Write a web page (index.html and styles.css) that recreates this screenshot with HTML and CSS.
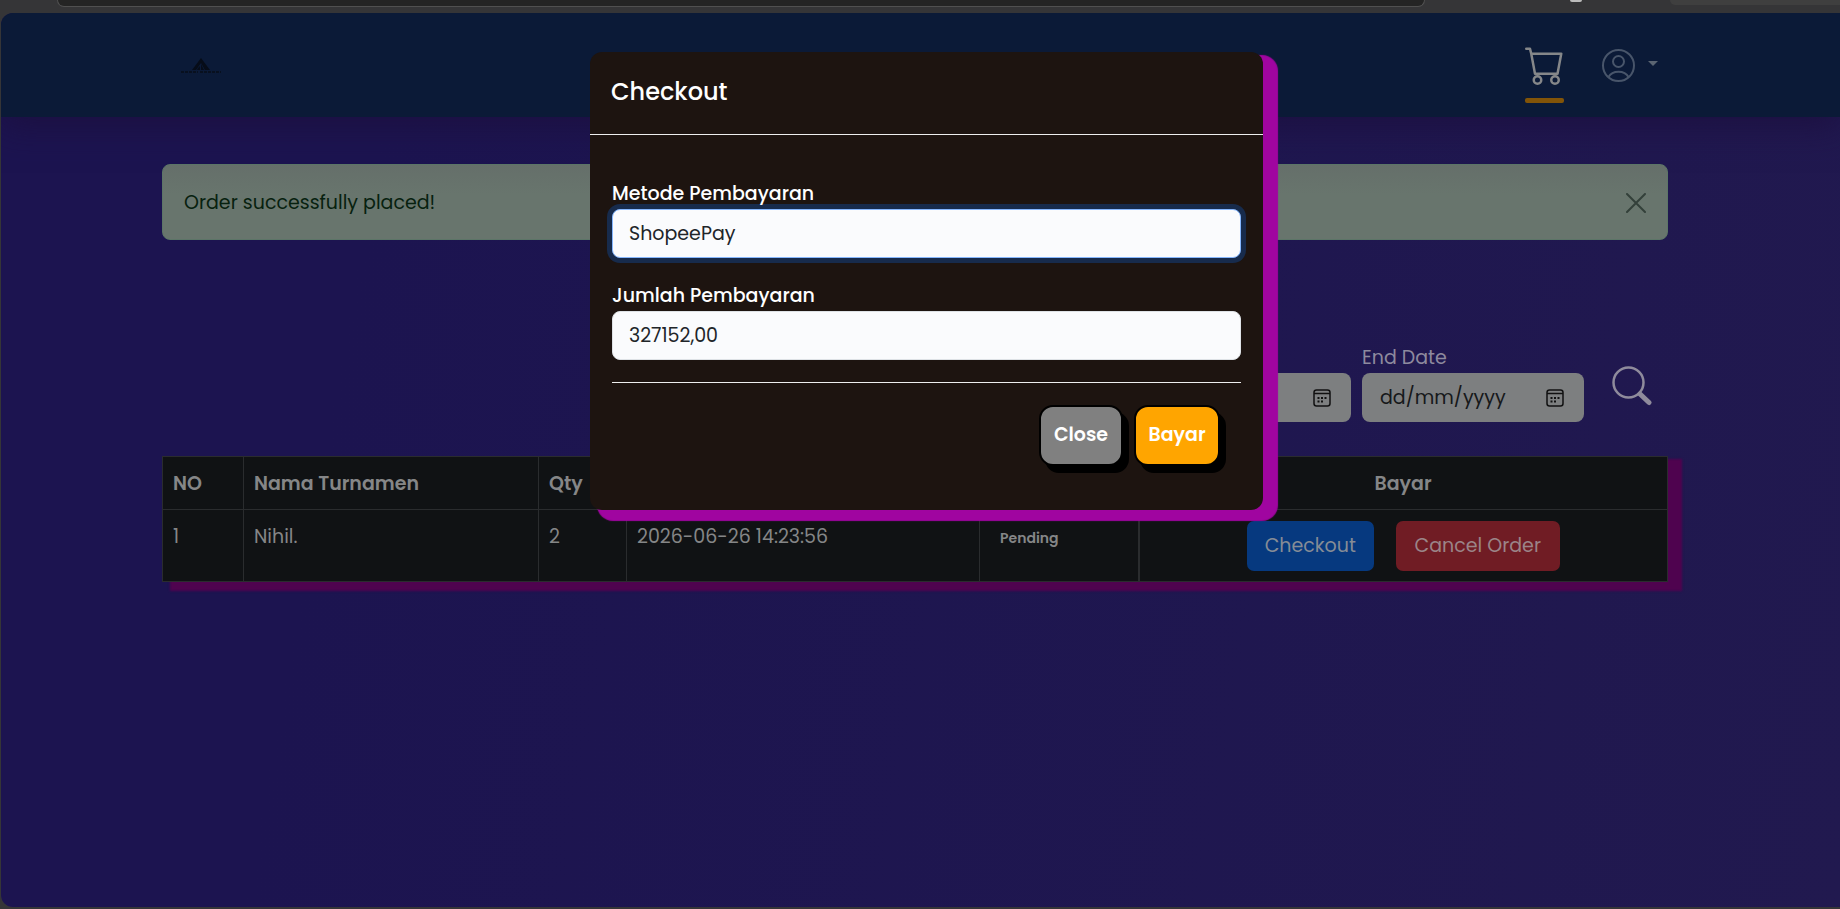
FILE: index.html
```html
<!DOCTYPE html>
<html lang="id">
<head>
<meta charset="utf-8">
<title>Checkout</title>
<link rel="stylesheet" href="styles.css">
</head>
<body>
<div class="chrome"><span class="address"></span><span class="dot"></span><span class="pill"></span></div>
<div class="page">
  <header class="navbar">
    <a class="brand" href="#" aria-label="Beranda">
      <svg width="40" height="18" viewBox="0 0 40 18"><path d="M20 0 29 12H24L20 5 15 12H11Z"/><path d="M20 6 23 12H20ZM17 10l2-2v4h-3z"/><path d="M0 14H17M19 14H40" stroke="#08101f" stroke-width="2" stroke-dasharray="3 1"/></svg>
    </a>
    <nav class="nav">
      <a class="cart" href="#" aria-label="Keranjang">
        <svg width="40" height="40" viewBox="0 0 16 16" fill="currentColor"><path d="M0 1.5A.5.5 0 0 1 .5 1H2a.5.5 0 0 1 .485.379L2.89 3H14.5a.5.5 0 0 1 .491.592l-1.5 8A.5.5 0 0 1 13 12H4a.5.5 0 0 1-.491-.408L2.01 3.607 1.61 2H.5a.5.5 0 0 1-.5-.5M3.102 4l1.313 7h8.17l1.313-7zM5 12a2 2 0 1 0 0 4 2 2 0 0 0 0-4m7 0a2 2 0 1 0 0 4 2 2 0 0 0 0-4m-7 1a1 1 0 1 1 0 2 1 1 0 0 1 0-2m7 0a1 1 0 1 1 0 2 1 1 0 0 1 0-2"/></svg>
      </a>
      <button class="user" type="button" aria-label="Akun">
        <svg width="33" height="33" viewBox="0 0 33 33" fill="none" stroke="currentColor" stroke-width="2"><circle cx="16.500" cy="16.500" r="15.500"/><circle cx="16.500" cy="12.500" r="5.500"/><path d="M6.500 28a11 9 0 0 1 20 0"/></svg>
        <span class="caret"></span>
      </button>
    </nav>
  </header>
  <main class="content">
    <div class="alert" role="alert">
      <span>Order successfully placed!</span>
      <button class="dismiss" type="button" aria-label="Tutup"><svg width="20" height="20" viewBox="0 0 20 20" stroke="currentColor" stroke-width="2" stroke-linecap="round"><path d="M1 1 19 19M19 1 1 19"/></svg></button>
    </div>
    <form class="filters">
      <div class="field">
        <div class="date"><input type="text" aria-label="Start Date" placeholder="dd/mm/yyyy"><svg class="cal" width="18" height="18" viewBox="0 0 18 18"><use href="#cal"/></svg></div>
      </div>
      <div class="field">
        <label for="end">End Date</label>
        <div class="date"><input id="end" type="text" placeholder="dd/mm/yyyy"><svg class="cal" width="18" height="18" viewBox="0 0 18 18"><g id="cal"><rect x="1" y="1" width="16" height="16" rx="2.500" fill="none" stroke="#111" stroke-width="1.500"/><path d="M1 4.500H17" stroke="#111" stroke-width="1.500"/><path d="M4.500 9h2M8 9h2M11.500 9h2M4.500 12.500h2M8 12.500h2" stroke="#111" stroke-width="2"/></g></svg></div>
      </div>
      <button class="search" type="button" aria-label="Cari"><svg width="40" height="40" viewBox="0 0 40 40" fill="none" stroke="currentColor"><circle cx="16.500" cy="16.500" r="15" stroke-width="2.500"/><path d="M28 28 37 36.500" stroke-width="5" stroke-linecap="round"/></svg></button>
    </form>
    <table class="orders">
      <colgroup><col class="c-no"><col class="c-name"><col class="c-qty"><col class="c-date"><col class="c-status"><col></colgroup>
      <thead><tr><th>NO</th><th>Nama Turnamen</th><th>Qty</th><th></th><th></th><th class="center">Bayar</th></tr></thead>
      <tbody><tr><td>1</td><td>Nihil.</td><td>2</td><td>2026-06-26 14:23:56</td><td><span class="badge">Pending</span></td>
      <td class="pay"><div class="actions"><button class="btn blue" type="button">Checkout</button><button class="btn red" type="button">Cancel Order</button></div></td></tr></tbody>
    </table>
  </main>
  <div class="overlay">
    <section class="modal" role="dialog" aria-labelledby="title">
      <h2 class="title" id="title">Checkout</h2>
      <form class="form">
        <label for="method">Metode Pembayaran</label>
        <select class="control focused" id="method"><option>ShopeePay</option></select>
        <label for="amount">Jumlah Pembayaran</label>
        <input class="control" id="amount" type="text" value="327152,00">
        <div class="footer">
          <button class="action close" type="button">Close</button>
          <button class="action submit" type="button">Bayar</button>
        </div>
      </form>
    </section>
  </div>
</div>
</body>
</html>
```
FILE: styles.css
```css
* { box-sizing: border-box; }
body {
  margin: 0;
  height: 100vh;
  display: flex;
  flex-direction: column;
  background: #353537;
  font: 19px/30px Poppins, Inter, sans-serif;
  padding: 0 0 2px 1px;
}
button, input, select { font: inherit; }
.chrome { height: 13px; display: flex; padding-left: 56px; flex: none; }
.address { flex: none; width: 1368px; height: 7px; background: #242424; border: solid #505050; border-width: 0 1px 1px; border-radius: 0 0 16px 16px; }
.dot { width: 12px; height: 2px; margin: 0 88px 0 145px; background: #bbb; border-radius: 0 0 6px 6px; flex: none; }
.pill { flex: 1; height: 5px; background: #3f3f3f; border-radius: 0 0 0 8px; }
.page {
  position: relative;
  flex: 1;
  border-radius: 12px 0 0 12px;
  overflow: hidden;
  background: linear-gradient(100deg, #1c1450 20%, #21194f);
}
.navbar {
  height: 104px;
  background: #0b1a37;
  box-shadow: 0 8px 32px #1c1040;
  padding: 0 182px 0 180px;
  display: flex;
  align-items: flex-start;
  justify-content: space-between;
}
.brand { margin-top: 45px; fill: #060c18; }
.brand svg, .cart svg, .user svg, .search svg, .dismiss svg { display: block; }
.nav { display: flex; gap: 38px; }
.cart { margin-top: 32px; width: 39px; color: #858789; }
.cart::after { content: ""; display: block; height: 5px; margin-top: 13px; border-radius: 2px; background: #825408; }
.user { margin-top: 36px; padding: 0; border: 0; background: none; color: #48556a; display: flex; align-items: flex-start; gap: 13px; }
.caret { margin-top: 12px; border: 5px solid transparent; border-top-color: #5b6572; border-bottom: 0; }
.content { padding: 47px 172px 0 161px; }
.alert {
  height: 76px;
  padding: 2px 21px 0;
  display: flex;
  align-items: center;
  justify-content: space-between;
  border-radius: 8px;
  background: linear-gradient(#656f6a, #68756d 40%);
  border: 1px solid #5c7567;
  color: #07210f;
}
.dismiss { border: 0; padding: 0; background: none; color: #33403a; }
.filters { margin-top: 102px; display: flex; justify-content: flex-end; align-items: flex-end; gap: 11px; padding-right: 16px; }
.field { flex: none; width: 222px; color: #8e8a9e; }
.field label { display: block; line-height: 31px; }
.date { height: 49px; display: flex; align-items: center; justify-content: space-between; background: #7d7f80; border-radius: 8px; padding: 0 20px 0 18px; }
.date input { width: 140px; padding: 0; border: 0; background: none; color: #16181a; outline: 0; }
.date input::placeholder { color: #16181a; opacity: 1; }
.search { margin: 0 0 16px 17px; border: 0; padding: 0; background: none; color: #8f8b9c; }
.orders {
  margin-top: 34px;
  width: 100%;
  table-layout: fixed;
  border-collapse: collapse;
  background: #101214;
  color: #858687;
  box-shadow: 11px 6px 2px 3px #4f034f;
}
.orders th, .orders td { border: 1px solid #2a2c2e; padding: 12px 10px 10px; text-align: left; vertical-align: top; }
.orders th { font-weight: 600; }
.orders .center { text-align: center; }
.orders .pay { padding: 11px 0 10px; border-left-width: 2px; }
.c-no { width: 81px; }
.c-name { width: 295px; }
.c-qty { width: 88px; }
.c-date { width: 353px; }
.c-status { width: 159px; }
.badge { padding-left: 10px; font-size: 14px; font-weight: 600; }
.actions { display: flex; justify-content: center; gap: 22px; }
.btn { height: 50px; border: 0; border-radius: 7px; padding: 0; color: #858c96; }
.blue { width: 127px; background: #06397f; }
.red { width: 164px; background: #701c24; color: #9b8488; }
.overlay { position: absolute; inset: 0; display: flex; justify-content: center; align-items: flex-start; padding: 39px 0 0 12px; }
.modal { width: 673px; background: #1d1410; border-radius: 12px; color: #fff; box-shadow: 11px 7px 1px 4px #a005a0; }
.title { margin: 0; padding: 22px 21px 24px; font-size: 24px; line-height: 36px; font-weight: 500; border-bottom: 1px solid #eee; }
.form { padding: 43px 22px 44px; }
.form label { display: block; font-weight: 500; line-height: 31px; }
.control {
  display: block;
  width: 100%;
  height: 49px;
  margin-bottom: 22px;
  padding: 0 16px;
  appearance: none;
  border: 1px solid #dee2e6;
  border-radius: 8px;
  background: #fafbfd;
  color: #212529;
}
.focused { border-color: #86b7fe; box-shadow: 0 0 0 5px #172b4c; }
.footer { border-top: 1px solid #eee; padding: 22px 21px 0; display: flex; justify-content: flex-end; gap: 11px; }
.action { height: 61px; border: 2px solid #000; border-radius: 14px; color: #fff; font-weight: 600; padding: 0 0 2px; box-shadow: 6px 7px 0 #000; }
.close { width: 84px; background: #808080; }
.submit { width: 86px; background: #ffa500; }
```
